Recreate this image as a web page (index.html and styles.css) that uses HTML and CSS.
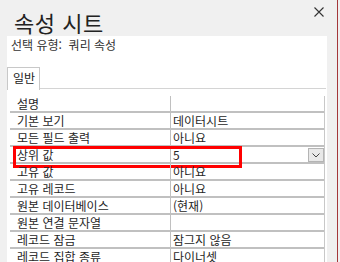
FILE: index.html
```html
<!DOCTYPE html>
<html lang="ko">
<head>
    <meta charset="UTF-8">
    <title>속성 시트</title>
    <link rel="stylesheet" href="styles.css">
</head>
<body>
    <div class="frame">
        <div class="header">
            <h1>속성 시트</h1>
            <svg class="close" width="10" height="10" viewBox="0 0 10 10">
                <path d="M0.5 0.5 L9.5 9.5 M9.5 0.5 L0.5 9.5" stroke="#333" stroke-width="1.1" fill="none"/>
            </svg>
        </div>

        <div class="panel">
            <div class="selection">선택 유형:&nbsp; 쿼리 속성</div>

            <div class="tabs">
                <div class="tab">일반</div>
                <div class="tab-fill"></div>
            </div>

            <div class="grid">
                <div class="row"><div class="label">설명</div><div class="value"></div></div>
                <div class="row"><div class="label">기본 보기</div><div class="value">데이터시트</div></div>
                <div class="row"><div class="label">모든 필드 출력</div><div class="value">아니요</div></div>
                <div class="row selected">
                    <div class="label">상위 값</div>
                    <div class="value">
                        <span>5</span>
                        <span class="drop">
                            <svg width="8" height="5" viewBox="0 0 8 5">
                                <path d="M0.5 0.5 L4 4 L7.5 0.5" stroke="#444" stroke-width="1" fill="none"/>
                            </svg>
                        </span>
                    </div>
                    <div class="highlight"></div>
                </div>
                <div class="row"><div class="label">고유 값</div><div class="value">아니요</div></div>
                <div class="row"><div class="label">고유 레코드</div><div class="value">아니요</div></div>
                <div class="row"><div class="label">원본 데이터베이스</div><div class="value">(현재)</div></div>
                <div class="row"><div class="label">원본 연결 문자열</div><div class="value"></div></div>
                <div class="row"><div class="label">레코드 잠금</div><div class="value">잠그지 않음</div></div>
                <div class="row"><div class="label">레코드 집합 종류</div><div class="value">다이너셋</div></div>
            </div>
        </div>
    </div>
</body>
</html>
```

FILE: styles.css
```css
* {
    margin: 0;
    padding: 0;
    box-sizing: border-box;
}

body {
    font-family: 'Noto Sans CJK KR', 'Malgun Gothic', sans-serif;
    background: #f0f0f0;
    color: #262626;
    width: 340px;
    height: 262px;
    overflow: hidden;
}

.frame {
    width: 338px;
    height: 262px;
    border-right: 1px solid #a4373a;
}

.header {
    height: 36px;
    display: flex;
    align-items: flex-start;
    padding: 7px 13px 0 14px;
}

.header h1 {
    font-size: 22px;
    font-weight: normal;
    line-height: 22px;
    letter-spacing: 0.5px;
    margin-top: 4px;
    color: #222;
}

.close {
    margin-left: auto;
}

.panel {
    background: white;
    margin-left: 7px;
    width: 320px;
    height: 226px;
}

.selection {
    height: 31px;
    padding: 1px 4px 0;
    font-size: 12px;
    line-height: 16px;
    color: #333;
}

.tabs {
    display: flex;
    height: 23px;
    margin-right: 1px;
}

.tab {
    width: 33px;
    border: 1px solid #c8c8c8;
    border-bottom: none;
    font-size: 12px;
    line-height: 20px;
    padding-left: 5px;
    color: #222;
}

.tab-fill {
    flex: 1;
    border-bottom: 1px solid #d4d4d4;
    margin-bottom: 1px;
}

.grid {
    margin: 6px 2px 0 3px;
    border-right: 1px solid #c8c8c8;
}

.row {
    position: relative;
    display: grid;
    grid-template-columns: 161px 1fr;
    height: 17px;
    border-bottom: 2px solid #c0c0c0;
    font-size: 12px;
    line-height: 15px;
}

.label {
    padding-left: 7px;
    border-right: 1px solid #c0c0c0;
    white-space: nowrap;
}

.value {
    padding-left: 2px;
    display: flex;
    white-space: nowrap;
}

.drop {
    margin-left: auto;
    margin-top: 1px;
    width: 16px;
    height: 14px;
    background: #e8e8e8;
    border: 1px solid #b4b4b4;
    display: flex;
    align-items: center;
    justify-content: center;
}

.highlight {
    position: absolute;
    left: 3px;
    top: -1px;
    width: 229px;
    height: 22px;
    border: 3px solid #ff0000;
}
```
